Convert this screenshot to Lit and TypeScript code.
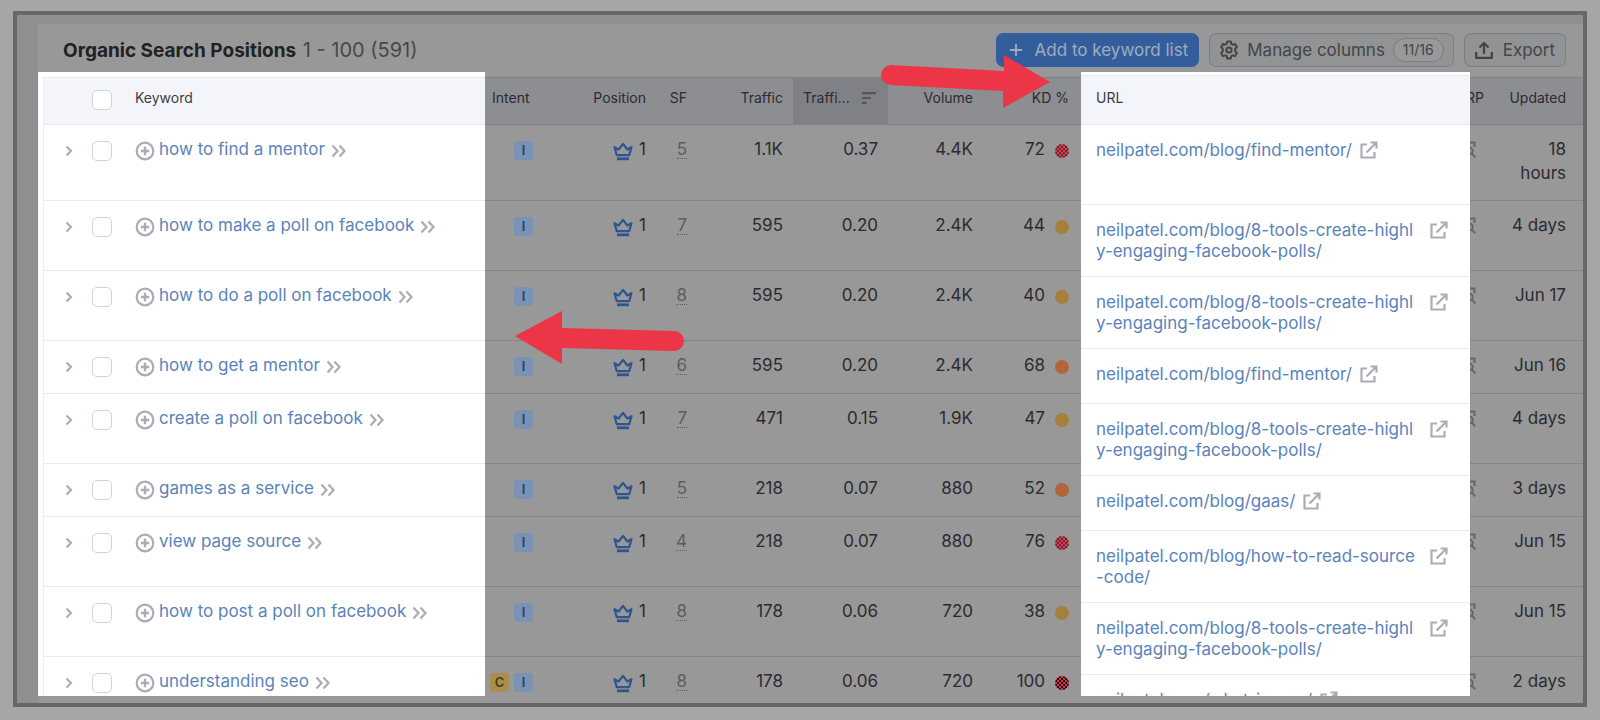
import { LitElement, html, css, svg } from "lit";
import { customElement } from "lit/decorators.js";
import { classMap } from "lit/directives/class-map.js";

interface Row {
  keyword: string;
  commercial?: boolean;
  sf: number;
  traffic: string;
  share: string;
  volume: string;
  kd: number;
  level: "medium" | "hard" | "harder" | "max";
  url: string;
  updated: string;
  size: "tall" | "normal" | "short";
}

const POLLS = "neilpatel.com/blog/8-tools-create-highly-engaging-facebook-polls/";

const ROWS: Row[] = [
  { keyword: "how to find a mentor", sf: 5, traffic: "1.1K", share: "0.37", volume: "4.4K", kd: 72, level: "harder", url: "neilpatel.com/blog/find-mentor/", updated: "18 hours", size: "tall" },
  { keyword: "how to make a poll on facebook", sf: 7, traffic: "595", share: "0.20", volume: "2.4K", kd: 44, level: "medium", url: POLLS, updated: "4 days", size: "normal" },
  { keyword: "how to do a poll on facebook", sf: 8, traffic: "595", share: "0.20", volume: "2.4K", kd: 40, level: "medium", url: POLLS, updated: "Jun 17", size: "normal" },
  { keyword: "how to get a mentor", sf: 6, traffic: "595", share: "0.20", volume: "2.4K", kd: 68, level: "hard", url: "neilpatel.com/blog/find-mentor/", updated: "Jun 16", size: "short" },
  { keyword: "create a poll on facebook", sf: 7, traffic: "471", share: "0.15", volume: "1.9K", kd: 47, level: "medium", url: POLLS, updated: "4 days", size: "normal" },
  { keyword: "games as a service", sf: 5, traffic: "218", share: "0.07", volume: "880", kd: 52, level: "hard", url: "neilpatel.com/blog/gaas/", updated: "3 days", size: "short" },
  { keyword: "view page source", sf: 4, traffic: "218", share: "0.07", volume: "880", kd: 76, level: "harder", url: "neilpatel.com/blog/how-to-read-source-code/", updated: "Jun 15", size: "normal" },
  { keyword: "how to post a poll on facebook", sf: 8, traffic: "178", share: "0.06", volume: "720", kd: 38, level: "medium", url: POLLS, updated: "Jun 15", size: "normal" },
  { keyword: "understanding seo", commercial: true, sf: 8, traffic: "178", share: "0.06", volume: "720", kd: 100, level: "max", url: "neilpatel.com/what-is-seo/", updated: "2 days", size: "normal" },
];

const icon = (cls: string, w: number, h: number, body: unknown) => html`
  <svg class="icon ${cls}" width=${w} height=${h} viewBox="0 0 ${w} ${h}" fill="none" aria-hidden="true">${body}</svg>`;

const chevron = () => icon("grey", 8, 12, svg`<path d="M1.5 1.5 6 6 1.5 10.5" stroke="currentColor" stroke-width="2.2"/>`);
const doubleChevron = () => icon("grey", 16, 14, svg`<path d="M1.5 1.5 6.500 7 1.5 12.5M8.5 1.5 13.500 7 8.5 12.5" stroke="currentColor" stroke-width="2.2"/>`);
const plusCircle = () => icon("grey", 20, 20, svg`<circle cx="10" cy="10" r="8.3" stroke="currentColor" stroke-width="2.2"/><path d="M10 5.8v8.4M5.8 10h8.4" stroke="currentColor" stroke-width="2.4"/>`);
const external = () => icon("grey", 18, 18, svg`<path d="M7 3.5H1.5v13h13V11" stroke="currentColor" stroke-width="2.2"/><path d="M6.5 11.5 15.5 2.5M10.5 1.5h6v6" stroke="currentColor" stroke-width="2.2"/>`);
const crown = () => icon("blue", 20, 19, svg`<path d="M1.5 5.200 5.600 7.500 10 1.800 14.400 7.500l4.100-2.300-2.300 8H3.800z" stroke="currentColor" stroke-width="2.2" stroke-linejoin="round"/><path d="M4 16.800h12" stroke="currentColor" stroke-width="2.8"/>`);
const sortIcon = () => icon("sort", 14, 12, svg`<path d="M0 1.2h14M0 6h9M0 10.8h4.5" stroke="currentColor" stroke-width="2.2"/>`);
const serpIcon = () => icon("serp", 18, 18, svg`<path d="M16.5 6V1.5h-15v15H6" stroke="currentColor" stroke-width="2"/><circle cx="11.5" cy="10" r="3.2" stroke="currentColor" stroke-width="2"/><path d="m13.8 12.4 3.4 4" stroke="currentColor" stroke-width="2"/>`);
const plus = () => icon("plus", 14, 14, svg`<path d="M7 1v12M1 7h12" stroke="currentColor" stroke-width="1.8"/>`);
const gear = () => icon("gear", 20, 20, svg`<path d="M8.2 1.5h3.6l.5 2.3 1.5.8 2.3-.7 1.8 3.1-1.7 1.7v2.6l1.7 1.7-1.8 3.1-2.3-.7-1.5.8-.5 2.3H8.2l-.5-2.3-1.5-.8-2.3.7L2.1 13l1.7-1.7V8.7L2.1 7l1.8-3.1 2.3.7 1.5-.8z" stroke="currentColor" stroke-width="2" stroke-linejoin="round"/><circle cx="10" cy="10" r="2.6" stroke="currentColor" stroke-width="2"/>`);
const upload = () => icon("upload", 18, 18, svg`<path d="M1.2 11v5.8h15.6V11M9 13V2.5M4.5 6.5 9 2l4.5 4.5" stroke="currentColor" stroke-width="2.2"/>`);

@customElement("app-root")
export class AppRoot extends LitElement {
  static styles = css`
    :host {
      display: block;
      box-sizing: border-box;
      height: 100vh;
      padding: 11px 13px 13px;
      background: #a6a6a6;
      font-family: Inter, "Liberation Sans", sans-serif;
      font-size: 17px;
      line-height: 24px;
      color: #2b2b30;
    }
    * { box-sizing: border-box; }
    .frame {
      position: relative;
      height: 100%;
      border: 4px solid #676767;
      padding: 9px 0 0 21px;
      background: #8f9092;
      overflow: hidden;
    }
    .card {
      display: flex;
      flex-direction: column;
      height: 100%;
      background: #989898;
    }
    .bar {
      display: flex;
      align-items: center;
      gap: 10px;
      flex: none;
      height: 48px;
      padding: 4px 17px 0 25px;
    }
    .title {
      flex: 1;
      margin: 0;
      font-size: 19px;
      font-weight: 700;
      color: #222125;
    }
    .count { font-size: 20px; font-weight: 400; color: #47484c; margin-left: 2px; }
    .btn {
      display: flex;
      align-items: center;
      gap: 10px;
      height: 34px;
      padding: 0 10px;
      border: 1px solid #7c7d80;
      border-radius: 7px;
      background: #929395;
      color: #444549;
      font: inherit;
    }
    .btn.primary {
      padding: 0 10px 0 12px;
      gap: 12px;
      border-color: #35609f;
      background: #345e9b;
      color: #9fadc0;
    }
    .btn.manage { gap: 8px; padding: 0 9px; }
    .pill {
      height: 24px;
      padding: 0 9px;
      border: 1px solid #7c7d80;
      border-radius: 12px;
      background: #999;
      font-size: 14px;
      line-height: 22px;
    }
    .sections {
      display: flex;
      flex: 1;
      min-height: 0;
    }
    .spot {
      position: relative;
      z-index: 1;
      flex: none;
      margin-bottom: 7px;
      background: #fff;
      overflow: hidden;
    }
    .keywords { width: 447px; padding: 5px 0 0 4px; border-left: 1px solid #f3f5fc; }
    .urls { width: 389px; padding-top: 3px; }
    .metrics { flex: 1; min-width: 0; padding-top: 5px; }
    .dates { flex: none; width: 153px; margin-left: -40px; padding-top: 5px; }
    table {
      width: 100%;
      border-collapse: separate;
      border-spacing: 0;
      table-layout: fixed;
    }
    .keywords table { border-left: 1px solid #eceef4; }
    th {
      height: 48px;
      padding: 0 10px 6px;
      border-top: 1px solid #7f8082;
      border-bottom: 1px solid #7f8082;
      background: #8d8e91;
      font-size: 14px;
      font-weight: 400;
      text-align: right;
      white-space: nowrap;
    }
    td {
      height: 70px;
      padding: 12px 10px 0;
      border-bottom: 1px solid #858585;
      text-align: right;
      vertical-align: top;
    }
    .tall td { height: 76px; }
    .short td { height: 53px; }
    .spot th { border-color: #e6e8ee; background: #f4f5fb; text-align: left; color: #3c3d42; }
    .spot td { border-color: #e9ebef; text-align: left; }
    .urls th { height: 50px; padding: 0 15px 4px; }
    .urls td { height: 72px; padding: 15px 22px 14px 15px; line-height: 21px; }
    .urls .tall td { height: 80px; }
    .urls .short td { height: 55px; }
    .icon { display: block; flex: none; }
    .grey { color: #a9adb6; }
    .blue { color: #2f5591; }
    .serp { color: #66676b; margin-top: 4px; }
    .sort { color: #55565b; }
    .plus { color: #9fadc0; }
    .lead { display: flex; align-items: center; padding-left: 11px; height: 28px; }
    .keywords td.check { padding: 16px 0 0 10px; line-height: 20px; }
    .keywords th.check { padding: 0 0 2px 10px; line-height: 20px; }
    .check input {
      appearance: none;
      display: block;
      width: 20px;
      height: 20px;
      margin: 0;
      border: 1px solid #ccd4e2;
      border-radius: 5px;
      background: #fff;
    }
    .keywords td:first-child { padding-left: 10px; padding-right: 0; }
    .expand, .add {
      display: flex;
      padding: 0;
      border: 0;
      background: none;
    }
    .add { padding-top: 3px; }
    .keywords td.word, .keywords th.word { padding-left: 0; }
    .phrase { display: flex; align-items: center; gap: 4px; }
    .phrase .more { display: flex; padding: 4px 0 0 2px; }
    a { color: #5a83ba; text-decoration: none; }
    .link { display: flex; gap: 8px; }
    .link a { flex: 0 1 auto; max-width: 326px; word-break: break-all; }
    .link.wrapped { justify-content: space-between; }
    .link .icon { margin-top: 1px; }
    .intents { display: flex; justify-content: flex-end; gap: 5px; padding: 4px 7px 0 0; }
    td.intent { padding-left: 5px; }
    th.intent { padding-left: 7px; text-align: left; }
    .tag {
      width: 19px;
      height: 19px;
      border-radius: 4px;
      background: #7a92b3;
      color: #243f6b;
      font-size: 13px;
      font-weight: 600;
      line-height: 19px;
      text-align: center;
    }
    .tag.commercial { background: #a98e50; color: #4b3b16; }
    .pos { display: flex; justify-content: flex-end; align-items: center; gap: 6px; }
    .pos .icon { margin-top: 4px; }
    .sf { color: #5c5d60; border-bottom: 1px dotted #5c5d60; line-height: 18px; display: inline-block; }
    th.sorted { padding-right: 12px; background: #808186; }
    .sorter { display: flex; align-items: center; justify-content: space-between; }
    th.kd, td.kd { padding-right: 12px; }
    .score { display: flex; justify-content: flex-end; align-items: center; gap: 10px; }
    .dot { width: 14px; height: 14px; margin-top: 3px; border-radius: 50%; }
    .medium { background: #a5803a; }
    .hard { background: repeating-conic-gradient(#c9583a 0 25%, #9d7137 0 50%) 0 0 / 4px 4px; }
    .harder { background: repeating-conic-gradient(#e53950 0 25%, #5b2d38 0 50%) 0 0 / 4px 4px; }
    .max { background: repeating-conic-gradient(#d93249 0 25%, #200f18 0 50%) 0 0 / 4px 4px; }
    .dates th, .dates td { padding-right: 17px; }
    .dates td:last-child { padding-left: 24px; }
    .dates .narrow { padding-left: 0; padding-right: 0; }
    .dates .narrow .icon { margin-left: 28px; }
    .arrow { position: absolute; z-index: 2; }
    .arrow.to-url { left: 864px; top: 39px; }
    .arrow.to-keyword { left: 497px; top: 294px; }
  `;

  private keywords() {
    return html`
      <section class="spot keywords">
        <table>
          <colgroup><col width="38" /><col width="53" /><col /></colgroup>
          <thead><tr>
            <th></th>
            <th class="check"><input type="checkbox" aria-label="Select all" /></th>
            <th class="word">Keyword</th>
          </tr></thead>
          <tbody>${ROWS.map((r) => html`
            <tr class=${r.size}>
              <td><div class="lead"><button class="expand" aria-label="Expand">${chevron()}</button></div></td>
              <td class="check"><input type="checkbox" aria-label=${r.keyword} /></td>
              <td class="word"><div class="phrase">
                <button class="add" aria-label="Add">${plusCircle()}</button>
                <a href="#">${r.keyword}</a>
                <span class="more">${doubleChevron()}</span>
              </div></td>
            </tr>`)}</tbody>
        </table>
      </section>`;
  }

  private metrics() {
    return html`
      <section class="metrics">
        <table>
          <colgroup><col width="65" /><col width="106" /><col width="41" /><col width="96" /><col width="95" /><col width="95" /><col /></colgroup>
          <thead><tr>
            <th class="intent">Intent</th><th>Position</th><th>SF</th><th>Traffic</th>
            <th class="sorted"><div class="sorter">Traffi... ${sortIcon()}</div></th>
            <th>Volume</th><th class="kd">KD %</th>
          </tr></thead>
          <tbody>${ROWS.map((r) => html`
            <tr class=${r.size}>
              <td class="intent"><div class="intents">
                ${r.commercial ? html`<span class="tag commercial">C</span>` : null}
                <span class="tag">I</span>
              </div></td>
              <td><div class="pos">${crown()}<span>1</span></div></td>
              <td><span class="sf">${r.sf}</span></td>
              <td>${r.traffic}</td>
              <td>${r.share}</td>
              <td>${r.volume}</td>
              <td class="kd"><div class="score">${r.kd}<span class="dot ${r.level}"></span></div></td>
            </tr>`)}</tbody>
        </table>
      </section>`;
  }

  private urls() {
    return html`
      <section class="spot urls">
        <table>
          <thead><tr><th>URL</th></tr></thead>
          <tbody>${ROWS.map((r) => html`
            <tr class=${r.size}>
              <td><div class=${classMap({ link: true, wrapped: r.url.length > 35 })}>
                <a href="#">${r.url}</a>${external()}
              </div></td>
            </tr>`)}</tbody>
        </table>
      </section>`;
  }

  private dates() {
    return html`
      <section class="dates">
        <table>
          <colgroup><col width="54" /><col /></colgroup>
          <thead><tr><th class="narrow">SERP</th><th>Updated</th></tr></thead>
          <tbody>${ROWS.map((r) => html`
            <tr class=${r.size}>
              <td class="narrow">${serpIcon()}</td>
              <td>${r.updated}</td>
            </tr>`)}</tbody>
        </table>
      </section>`;
  }

  render() {
    return html`
      <main class="frame">
        <div class="card">
          <header class="bar">
            <h1 class="title">Organic Search Positions <span class="count">1 - 100 (591)</span></h1>
            <button class="btn primary">${plus()}Add to keyword list</button>
            <button class="btn manage">${gear()}Manage columns<span class="pill">11/16</span></button>
            <button class="btn">${upload()}Export</button>
          </header>
          <div class="sections">
            ${this.keywords()}${this.metrics()}${this.urls()}${this.dates()}
          </div>
        </div>
        <svg class="arrow to-url" width="170" height="56" viewBox="0 0 170 56" aria-hidden="true">
          <path d="M10 11 123 17V1L169 28 122 54V37L10 31A10 10 0 0 1 10 11Z" fill="#ec3547" />
        </svg>
        <svg class="arrow to-keyword" width="172" height="56" viewBox="0 0 172 56" aria-hidden="true">
          <path d="M1 27 48 2V19L160 22A10 10 0 0 1 160 42L48 39V55Z" fill="#ec3547" />
        </svg>
      </main>`;
  }
}
